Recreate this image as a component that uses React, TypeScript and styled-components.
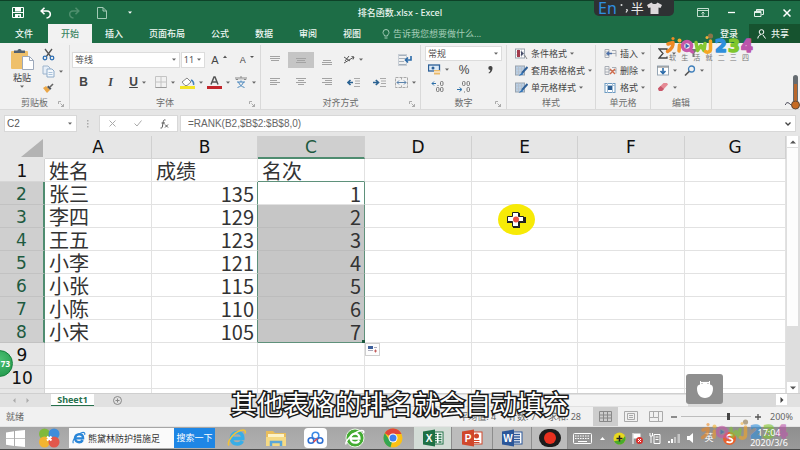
import React from "react";
import styled, { createGlobalStyle, css } from "styled-components";

const GREEN = "#1d6d46";
const UI_FONT = `"Noto Sans", "Noto Sans CJK SC", sans-serif`;

const GlobalStyle = createGlobalStyle`
  *, *::before, *::after { box-sizing: border-box; }
  html, body { margin: 0; padding: 0; }
  body { font-family: ${UI_FONT}; font-size: 9px; line-height: 12px; color: #444; background: #e6e6e6; }
  button, input, select { font: inherit; color: inherit; margin: 0; }
  button { border: 0; padding: 0; background: none; cursor: pointer; }
  svg { display: block; flex: none; }
`;

const Window = styled.div`
  position: relative;
  display: flex;
  flex-direction: column;
  height: 100vh;
  overflow: hidden;
`;

/* ---------- title bar ---------- */
const TopBar = styled.header`
  background: ${GREEN};
  border-top: 1px solid #0d4127;
  color: #e9f4ee;
`;
const TitleRow = styled.div`
  display: grid;
  grid-template-columns: 1fr auto 1fr;
  align-items: center;
  height: 23px;
`;
const QuickAccess = styled.div`
  display: flex;
  align-items: center;
  gap: 16px;
  padding-left: 12px;
`;
const Title = styled.h1`
  margin: 0;
  font-size: 9px;
  line-height: 12px;
  font-weight: 500;
`;
const WindowButtons = styled.div`
  display: flex;
  justify-content: flex-end;
  align-items: center;
  gap: 16px;
  padding-right: 7px;
`;
const IconButton = styled.button`
  display: flex;
  align-items: center;
  justify-content: center;
  gap: 4px;
  min-width: 12px;
  height: 14px;
`;

const TabRow = styled.nav`
  display: flex;
  align-items: stretch;
  height: 19px;
`;
const Tab = styled.button<{ $active?: boolean; $w?: number }>`
  width: ${(p) => p.$w ?? 44}px;
  height: 19px;
  line-height: 18px;
  font-weight: 500;
  color: ${(p) => (p.$active ? "#3c8563" : "#eef7f2")};
  background: ${(p) => (p.$active ? "#f2f2f2" : "transparent")};
`;
const TellMe = styled.label`
  display: flex;
  align-items: center;
  flex: 1;
  gap: 3px;
  padding-left: 8px;
  color: #a5cdb8;
  input {
    width: 120px;
    border: 0;
    padding: 0;
    height: 16px;
    background: transparent;
    outline: none;
  }
  input::placeholder { color: #a5cdb8; opacity: 1; }
`;
const SignIn = styled.button`
  width: 36px;
  margin-right: 2px;
  font-weight: 500;
`;
const Share = styled.button`
  display: flex;
  align-items: center;
  gap: 5px;
  width: 51px;
  padding-left: 8px;
  background: #16532f;
  font-weight: 500;
`;

/* ---------- ribbon ---------- */
const Ribbon = styled.div`
  display: flex;
  height: 67px;
  padding: 2px 0 0;
  background: #f1f1f1;
  border-bottom: 1px solid #dadada;
`;
const Group = styled.section<{ $w: number }>`
  display: flex;
  flex-direction: column;
  width: ${(p) => p.$w}px;
  height: 64px;
  border-right: 1px solid #d9d9d9;
`;
const GroupBody = styled.div`
  flex: 1;
  display: flex;
  flex-direction: column;
`;
const GroupLabel = styled.div`
  position: relative;
  height: 13px;
  line-height: 14px;
  text-align: center;
  color: #6c6c6c;
  svg { position: absolute; right: 5px; top: 5px; }
`;
const ClipBody = styled.div`
  flex: 1;
  display: grid;
  grid-template-columns: 42px 1fr;
  padding-top: 2px;
`;
const PasteButton = styled.button`
  display: flex;
  flex-direction: column;
  align-items: center;
  width: 42px;
  line-height: 14px;
  padding: 1px 0 0 2px;
`;
const ClipTools = styled.div`
  display: flex;
  flex-direction: column;
  align-items: flex-start;
  gap: 3px;
`;
const AlignRow = styled.div`
  display: grid;
  grid-auto-flow: column;
  grid-auto-columns: 26px;
  align-items: center;
  height: 28px;
  padding: 1px 0 0 1px;
`;
const ToolRow = styled.div<{ $cell: number; $pad?: number }>`
  display: grid;
  grid-auto-flow: column;
  grid-auto-columns: ${(p) => p.$cell}px;
  justify-content: start;
  align-items: center;
  height: 18px;
  padding-left: ${(p) => p.$pad ?? 1}px;
`;
const Tool = styled.button<{ $on?: boolean }>`
  display: flex;
  align-items: center;
  justify-content: center;
  gap: 4px;
  height: 16px;
  background: ${(p) => (p.$on ? "#c5c5c5" : "transparent")};
`;
const Glyph = styled.span<{ $kind?: "bold" | "italic" | "under" | "grow" | "shrink" | "percent" }>`
  font-family: "Liberation Sans", sans-serif;
  font-size: 12px;
  line-height: 16px;
  font-weight: 700;
  color: #444;
  ${(p) => p.$kind === "italic" && css`font-family: "Liberation Serif", serif; font-style: italic;`}
  ${(p) => p.$kind === "under" && css`text-decoration: underline;`}
  ${(p) => p.$kind === "grow" && css`font-size: 11px; font-weight: 400;`}
  ${(p) => p.$kind === "shrink" && css`font-size: 9px; font-weight: 400;`}
  ${(p) => p.$kind === "percent" && css`font-weight: 400;`}
`;
const FontRow = styled.div`
  display: flex;
  align-items: center;
  gap: 1px;
  height: 28px;
  padding: 1px 0 0 2px;
`;
const SelectBox = styled.span<{ $w: number; $small?: boolean }>`
  display: grid;
  grid-template-columns: 1fr 7px;
  align-items: center;
  width: ${(p) => p.$w}px;
  height: ${(p) => (p.$small ? 15 : 16)}px;
  background: #fff;
  border: 1px solid #dcdcdc;
  select {
    grid-area: 1 / 1 / 2 / 3;
    appearance: none;
    width: 100%;
    height: 13px;
    line-height: 13px;
    border: 0;
    outline: none;
    padding: 0 0 0 2px;
    background: transparent;
    color: #555;
  }
  svg { grid-area: 1 / 2 / 2 / 3; pointer-events: none; }
`;
const GrowTool = styled(Tool)`
  width: 27px;
`;
const NumberBody = styled.div`
  flex: 1;
  display: flex;
  flex-direction: column;
  padding: 1px 0 0 4px;
`;
const NumberRow = styled.div`
  display: grid;
  grid-template-columns: repeat(3, 26px);
  align-items: center;
  height: 17px;
`;
const List = styled.div`
  flex: 1;
  display: flex;
  flex-direction: column;
  padding-left: 8px;
`;
const ListButton = styled.button`
  display: flex;
  align-items: center;
  gap: 3px;
  height: 17px;
  line-height: 14px;
  white-space: nowrap;
`;
const EditGrid = styled.div`
  flex: 1;
  display: grid;
  grid-template-columns: 27px 27px;
  grid-auto-rows: 17px;
  padding-left: 2px;
`;

/* ---------- formula bar ---------- */
const FormulaBar = styled.div`
  display: flex;
  align-items: stretch;
  height: 26px;
  padding: 5px 4px 4px 4px;
  background: #e6e6e6;
`;
const NameBox = styled.label`
  display: flex;
  align-items: center;
  width: 73px;
  padding-right: 4px;
  background: #fff;
  border: 1px solid #d8d8d8;
  input {
    flex: 1;
    width: 20px;
    height: 14px;
    border: 0;
    padding: 0 0 0 2px;
    outline: none;
    background: transparent;
    font: 10px/14px "Liberation Sans", sans-serif;
    color: #555;
  }
`;
const Dots = styled.div`
  display: flex;
  align-items: center;
  justify-content: center;
  width: 22px;
`;
const FormulaTools = styled.div`
  display: flex;
  align-items: center;
  justify-content: space-around;
  width: 79px;
  margin-right: 2px;
  background: #fff;
  border: 1px solid #d8d8d8;
`;
const FormulaField = styled.label`
  flex: 1;
  display: flex;
  align-items: center;
  padding-right: 4px;
  background: #fff;
  border: 1px solid #d8d8d8;
  input {
    flex: 1;
    height: 14px;
    border: 0;
    padding: 0 0 0 7px;
    outline: none;
    background: transparent;
    font: 10px/14px "Liberation Sans", sans-serif;
    color: #666;
  }
`;

/* ---------- sheet ---------- */
const SheetArea = styled.main`
  flex: 1 1 0;
  min-height: 0;
  display: grid;
  grid-template-columns: 1fr 14px;
  overflow: hidden;
`;
const TableClip = styled.div`
  min-height: 0;
  overflow: hidden;
  background: #fff;
`;
const Table = styled.table`
  width: 100%;
  table-layout: fixed;
  border-collapse: separate;
  border-spacing: 0;
`;
const Col = styled.col<{ $w?: number }>`
  width: ${(p) => (p.$w ? `${p.$w}px` : "auto")};
`;
const HeadCell = styled.th<{ $sel?: boolean }>`
  height: 23px;
  padding: 0;
  font: 400 17px/20px "DejaVu Sans", sans-serif;
  color: ${(p) => (p.$sel ? "#1d5a40" : "#111")};
  background: ${(p) => (p.$sel ? "#cfcfcf" : "#e6e6e6")};
  border-right: 1px solid #d0d0d0;
  border-bottom: ${(p) => (p.$sel ? "2px solid #4f8c70" : "1px solid #d4d4d4")};
`;
const Corner = styled.th`
  padding: 0 1px 1px 0;
  background: #e6e6e6;
  vertical-align: bottom;
  svg { margin-left: auto; }
`;
const RowHead = styled.th<{ $sel?: boolean }>`
  height: 23px;
  padding: 2px 0 0;
  font: 400 17px/20px "DejaVu Sans", sans-serif;
  color: ${(p) => (p.$sel ? "#1d5a40" : "#111")};
  background: ${(p) => (p.$sel ? "#cfcfcf" : "#e6e6e6")};
  border-right: ${(p) => (p.$sel ? "2px solid #4f8c70" : "1px solid #d4d4d4")};
  border-bottom: 1px solid ${(p) => (p.$sel ? "#c2c2c2" : "#d6d6d6")};
`;
const Cell = styled.td<{ $num?: boolean; $fill?: boolean; $greenRight?: boolean; $greenBottom?: boolean }>`
  position: relative;
  height: 23px;
  padding: 2px 3px 0 4px;
  font: 20px/20px "Noto Sans CJK SC", sans-serif;
  color: #333;
  white-space: nowrap;
  text-align: ${(p) => (p.$num ? "right" : "left")};
  background: ${(p) => (p.$fill ? "#c6c6c6" : "#fff")};
  border-right: 1px solid ${(p) => (p.$greenRight ? "#5f917b" : p.$fill ? "#c6c6c6" : "#e2e2e2")};
  border-bottom: 1px solid ${(p) => (p.$greenBottom ? "#5f917b" : p.$fill ? "#bcbcbc" : "#e2e2e2")};
`;
const FillHandle = styled.span`
  position: absolute;
  right: -2px;
  bottom: -2px;
  width: 4px;
  height: 4px;
  background: #1d5a40;
`;
const FillOptions = styled.button`
  position: absolute;
  left: 100%;
  top: 100%;
  z-index: 1;
  display: flex;
  align-items: center;
  justify-content: center;
  width: 15px;
  height: 13px;
  margin: 1px 0 0 1px;
  background: #fdfdfd;
  border: 1px solid #cfcfcf;
`;
const VScroll = styled.div`
  display: flex;
  flex-direction: column;
  justify-content: space-between;
  padding: 0 2px 0 1px;
  background: #dedede;
`;
const ScrollButton = styled.button`
  display: flex;
  align-items: center;
  justify-content: center;
  width: 11px;
  height: 11px;
  background: #fff;
`;
const ScrollThumb = styled.div`
  flex: 1;
  margin: 1px 0 56px;
  background: #fdfdfd;
`;

/* ---------- sheet tabs / status ---------- */
const SheetTabs = styled.div`
  display: flex;
  align-items: stretch;
  height: 14px;
  background: #e1e1e1;
  border-top: 1px solid #cfcfcf;
`;
const TabArrows = styled.div`
  display: flex;
  align-items: center;
  gap: 10px;
  width: 51px;
  padding-left: 12px;
`;
const SheetTab = styled.button`
  width: 43px;
  height: 12px;
  line-height: 10px;
  font-weight: 700;
  color: #26704c;
  background: #fff;
  border-bottom: 1px solid #26704c;
`;
const AddSheet = styled.button`
  display: flex;
  align-items: center;
  justify-content: center;
  width: 46px;
`;
const HScroll = styled.div`
  flex: 1;
  display: flex;
  justify-content: flex-end;
  margin-left: 260px;
`;
const HThumb = styled.div`
  flex: 1;
  margin: 1px 0;
  background: #f4f4f4;
`;
const HTrack = styled.div`
  width: 88px;
  background: #dadada;
`;
const HEnd = styled.div`
  width: 13px;
`;
const StatusBar = styled.footer`
  display: flex;
  align-items: center;
  height: 20px;
  padding: 0 7px 0 6px;
  background: #f1f1f1;
  color: #666;
  border-bottom: 1px solid #e4e4e4;
`;
const StatusText = styled.span`
  flex: 1;
`;
const Stats = styled.div`
  display: flex;
  gap: 12px;
  margin-right: 12px;
  white-space: nowrap;
`;
const ViewButton = styled.button<{ $on?: boolean }>`
  display: flex;
  align-items: center;
  justify-content: center;
  width: 25px;
  height: 19px;
  background: ${(p) => (p.$on ? "#cdcdcd" : "transparent")};
`;
const Zoom = styled.div`
  display: flex;
  align-items: center;
  gap: 1px;
  input {
    appearance: none;
    width: 70px;
    height: 8px;
    background: linear-gradient(#bdbdbd, #bdbdbd) center / 100% 1px no-repeat;
  }
  input::-webkit-slider-thumb {
    appearance: none;
    width: 3px;
    height: 7px;
    background: #444;
  }
`;
const ZoomValue = styled.span`
  width: 28px;
  text-align: right;
`;

/* ---------- taskbar ---------- */
const Taskbar = styled.div`
  display: flex;
  align-items: stretch;
  height: 23px;
  background: linear-gradient(#a6a6a6, #b0b0b0);
  border-bottom: 1px solid #4a4a4a;
`;
const TaskButton = styled.button<{ $w: number; $state?: "active" | "open" }>`
  display: flex;
  align-items: center;
  justify-content: center;
  width: ${(p) => p.$w}px;
  flex: none;
  background: ${(p) => (p.$state === "active" ? "#d3dcd6" : p.$state === "open" ? "#bcbcbc" : "transparent")};
  border-right: ${(p) => (p.$state ? "1px solid #8d8d8d" : "0")};
`;
const SearchBox = styled.label`
  display: flex;
  align-items: center;
  gap: 2px;
  width: 105px;
  margin: 1px 0 1px;
  padding-left: 3px;
  background: #fafafa;
  input {
    width: 84px;
    height: 16px;
    padding: 0;
    border: 0;
    background: transparent;
    outline: none;
    color: #333;
  }
`;
const SearchButton = styled.button`
  width: 41px;
  margin: 1px 0;
  background: #1e86e5;
  color: #fff;
`;
const Tray = styled.div`
  flex: 1;
  display: flex;
  align-items: center;
  justify-content: flex-end;
  background: linear-gradient(#8f8f8f, #9a9a9a);
`;
const TrayItem = styled.button<{ $w?: number }>`
  display: flex;
  align-items: center;
  justify-content: center;
  width: ${(p) => p.$w ?? 18}px;
  height: 20px;
  color: #fff;
`;
const Clock = styled.time`
  position: relative;
  z-index: 1;
  width: 60px;
  padding-right: 2px;
  text-align: center;
  line-height: 10px;
  color: #fff;
  span { display: block; }
`;

/* ---------- overlays ---------- */
const ImeBar = styled.div`
  position: absolute;
  top: 0;
  right: 126px;
  display: flex;
  align-items: center;
  gap: 3px;
  width: 80px;
  height: 16px;
  padding-left: 4px;
  background: #2e3133;
  border-radius: 0 0 5px 5px;
  color: #e8e8e8;
  font-size: 13px;
  line-height: 16px;
`;
const ImeMode = styled.span`
  color: #2f8fe0;
  font-size: 16px;
  line-height: 16px;
`;
const Brand = styled.div<{ $foot?: boolean }>`
  position: absolute;
  right: ${(p) => (p.$foot ? 10 : 45)}px;
  ${(p) => (p.$foot ? "bottom: 8px; opacity: 0.6;" : "top: 32px;")}
  pointer-events: none;
`;
const BrandCaption = styled.div`
  display: flex;
  justify-content: space-between;
  width: 80px;
  margin: -2px 0 0 8px;
  font-size: 7px;
  line-height: 8px;
  color: #777;
`;
const Thermometer = styled.div`
  position: absolute;
  right: 0;
  top: 74px;
`;
const Pointer = styled.div`
  position: absolute;
  left: 498px;
  top: 204px;
`;
const Bubble = styled.div`
  position: absolute;
  left: -14px;
  top: 350px;
  width: 27px;
  height: 27px;
  border-radius: 50%;
  background: radial-gradient(circle at 50% 35%, #4cc273, #1d9247);
  border: 1px solid #16803b;
  color: #fff;
  font: 700 8px/25px "Noto Sans", sans-serif;
  text-align: right;
  padding-right: 2px;
`;
const MouseBadge = styled.div`
  position: absolute;
  right: 77px;
  bottom: 46px;
  display: flex;
  align-items: center;
  justify-content: center;
  width: 37px;
  height: 30px;
  border-radius: 3px;
  background: #8f8f8f;
`;
const Caption = styled.p`
  position: absolute;
  left: 0;
  right: 0;
  bottom: 31px;
  margin: 0;
  text-align: center;
  font: 400 26px/32px "Noto Sans CJK SC", sans-serif;
  color: #fff;
  -webkit-text-stroke: 3px #1a1a1a;
  paint-order: stroke fill;
  pointer-events: none;
`;

/* ---------- drawings ---------- */
const Caret = ({ c = "#666" }: { c?: string }) => (
  <svg width="4" height="3" viewBox="0 0 4 3"><path d="M0 0.5h4L2 2.7z" fill={c} /></svg>
);
const Launcher = () => (
  <svg width="6" height="6" viewBox="0 0 6 6" fill="none" stroke="#999" strokeWidth=".8"><path d="M.5 3V.5H3M2.5 2.5l3 3M5.5 3v2.5H3" /></svg>
);
const Lines = ({ rows }: { rows: [number, number, number][] }) => (
  <svg width="12" height="12" viewBox="0 0 12 12" stroke="#a3a3a3" strokeWidth="1">
    {rows.map(([x1, x2, y], i) => <path key={i} d={`M${x1} ${y}H${x2}`} />)}
  </svg>
);
const IndentIcon = ({ right }: { right?: boolean }) => (
  <svg width="13" height="11" viewBox="0 0 13 11">
    <path d="M7 1.5h6M8 4h5M8 6.500h5M7 9.500h6" stroke="#aaa" />
    <path d={right ? "M0 5.500h4.500M2.800 3l2.700 2.500-2.700 2.500" : "M6 5.500H1.500M3.500 3L.8 5.500l2.700 2.500"} fill="none" stroke="#2a6292" strokeWidth="1.600" />
  </svg>
);
const DecimalIcon = ({ add }: { add?: boolean }) => (
  <svg width="14" height="12" viewBox="0 0 14 12" fill="none" stroke="#777">
    {add ? (
      <>
        <path d="M0 8.500h4M2.500 6.500L5 8.500l-2.500 2" stroke="#2c6fa8" />
        <rect x="5.500" y=".5" width="2.500" height="4" rx="1" /><rect x="10" y=".5" width="2.500" height="4" rx="1" /><rect x="10" y="6.500" width="2.500" height="4" rx="1" /><path d="M7.500 10.500v1" />
      </>
    ) : (
      <>
        <path d="M5 2.500H1M3 .5L1 2.500l2 2" stroke="#2c6fa8" />
        <rect x="9.500" y=".5" width="2.500" height="4" rx="1" /><rect x="5.500" y="6.500" width="2.500" height="4" rx="1" /><rect x="9.500" y="6.500" width="2.500" height="4" rx="1" /><path d="M7 4v1" />
      </>
    )}
  </svg>
);
const StyleIcon = ({ cond }: { cond?: boolean }) => (
  <svg width="13" height="12" viewBox="0 0 13 12">
    <rect x=".5" y="1" width="9" height="9" fill={cond ? "#fff" : "#b9cfe6"} stroke="#9aa4ae" />
    <path d="M3.500 1v9M6.500 1v9M.5 4h9M.5 7h9" stroke="#b6bcc4" strokeWidth=".7" />
    {cond ? (
      <><rect x="2" y="2" width="3" height="7" fill="#a33b4c" /><path d="M6 3l3 2.500L6 8z" fill="#454b68" /><path d="M9.500 7l2.500 4" stroke="#888" /></>
    ) : (
      <><path d="M12.500 2L7 8" stroke="#2f5f96" strokeWidth="2" /><path d="M7.500 7l-4 4 4.500-1.500z" fill="#2d72b8" /></>
    )}
  </svg>
);
const CellIcon = ({ kind }: { kind: "insert" | "delete" | "format" }) => (
  <svg width="13" height="12" viewBox="0 0 13 12" fill="none">
    {kind === "format" ? (
      <><rect x="1" y="1.500" width="10" height="9" fill="#fff" stroke="#6d9bc2" /><path d="M1 3.500h10M3.500 1v10M8.500 1v10" stroke="#a3bdd4" /><rect x="4" y="4" width="4" height="4" fill="#2b5e93" /></>
    ) : (
      <>
        <path d="M1 1.500h4v8H1zM1 4h4M1 7h4M5 5.500h7M8 2.500h4v6" stroke="#a8adb5" />
        {kind === "insert" ? <path d="M3 5.500h5M5 3.800L3 5.500l2 1.700" stroke="#4b6fa8" strokeWidth="1.300" /> : <path d="M6 4l5 5M11 4L6 9" stroke="#cf6a4a" strokeWidth="1.400" />}
      </>
    )}
  </svg>
);
const IeIcon = ({ s, c = "#2a86d8", ring = "#f0c23a" }: { s: number; c?: string; ring?: string }) => (
  <svg width={s} height={s} viewBox="0 0 20 20" fill="none">
    <path d="M4.500 10.500h11.300c.2-4-2.300-6-5.500-6-3.500 0-6 2.500-6 5.800 0 3.400 2.600 5.700 5.900 5.700 2.400 0 4.200-1 5.200-3" stroke={c} strokeWidth="3.500" />
    <path d="M2 17.500C-.5 14 6 5 13.500 2.500c4-1.300 5.500.3 4.500 3" stroke={ring} strokeWidth="1.600" />
  </svg>
);
const GreenBrowserIcon = () => (
  <svg width="22" height="20" viewBox="0 0 22 20" fill="none">
    <circle cx="11" cy="10" r="9" fill="#43ab32" stroke="#e9f6e4" />
    <path d="M6.500 10.500h9c.1-3-1.700-4.800-4.300-4.800-2.700 0-4.700 1.900-4.700 4.600 0 2.600 2 4.400 4.700 4.400 1.900 0 3.300-.8 4.100-2.300" stroke="#fff" strokeWidth="2.300" />
    <path d="M2 16.500C1 13 8 6 14.500 3.200c4-1.500 6-.7 5 2" stroke="#fff" strokeWidth="1.500" />
  </svg>
);
const OfficeIcon = ({ c, letter }: { c: string; letter: string }) => (
  <svg width="22" height="18" viewBox="0 0 22 18">
    <rect x="10" y="3" width="11" height="12" fill="#fff" stroke={c} />
    {letter === "P" ? (
      <><circle cx="15.500" cy="7" r="2.500" fill={c} /><path d="M12.500 11.500h6M12.500 13.500h6" stroke={c} /></>
    ) : (
      <path d={letter === "X" ? "M12 5.500h3M16.500 5.500h3M12 8h3M16.500 8h3M12 10.500h3M16.500 10.500h3M12 13h3M16.500 13h3" : "M12 5.500h7M12 8h7M12 10.500h7M12 13h7"} stroke={c} strokeWidth="1.300" />
    )}
    <path d="M1 2.500L13 .5v17L1 15.500z" fill={c} />
    <text x="7" y="12.500" textAnchor="middle" fontSize="10" fontWeight="700" fontFamily="Liberation Sans, sans-serif" fill="#fff">{letter}</text>
  </svg>
);
const BrandArt = () => (
  <svg width="94" height="24" viewBox="0 0 94 24" fontFamily="DejaVu Sans, sans-serif" fontWeight="700">
    <g fontSize="17" strokeWidth="1.500" strokeLinejoin="round">
      <text x="54" y="20" fill="#2e8fdc" stroke="#2e8fdc">2</text>
      <text x="67" y="20" fill="#7fc62d" stroke="#7fc62d">3</text>
      <text x="80" y="20" fill="#bb55ab" stroke="#bb55ab">4</text>
    </g>
    <g fill="none" strokeLinecap="round" strokeLinejoin="round" strokeWidth="3.500">
      <path d="M7 12l5-1.500M12 10.500c.5 4-2 7-5.500 9" stroke="#f08a24" />
      <path d="M18.500 13l-.5 6" stroke="#f39a2b" />
      <circle cx="26" cy="14" r="4.500" stroke="#c657a8" />
      <path d="M29 18l2.500 2" stroke="#c657a8" />
      <path d="M35 10.500l1.500 8 3.500-5 3 5 1-7" stroke="#86c832" />
      <path d="M49.500 9v8c0 3-3 4-5 2.500" stroke="#f5a623" />
    </g>
    <circle cx="12" cy="6.500" r="1.600" fill="#f08a24" /><circle cx="18.500" cy="8.500" r="2" fill="#f3b02b" />
    <path d="M24.500 11.500l4 2.500-4 2.500z" fill="#3767b0" />
    <circle cx="49.500" cy="4" r="2.600" fill="#8a7448" /><circle cx="46" cy="5.500" r="1.500" fill="#f1b13b" />
  </svg>
);

const tableRows: [string, number][] = [
  ["张三", 135], ["李四", 129], ["王五", 123], ["小李", 121], ["小张", 115], ["小陈", 110], ["小宋", 105],
];
const columns = ["A", "B", "C", "D", "E", "F", "G"];
const columnWidths = [45, 107, 106, 107, 107, 106, 107];

function Sheet() {
  const blanks = (n: number) => Array.from({ length: n }, (_, i) => <Cell key={`blank-${i}`} />);
  return (
    <SheetArea>
      <TableClip>
        <Table>
          <colgroup>
            {columnWidths.map((w, i) => <Col key={i} $w={w} />)}
            <Col />
          </colgroup>
          <thead>
            <tr>
              <Corner aria-label="全选">
                <svg width="24" height="20" viewBox="0 0 24 20"><path d="M23 1v18H1z" fill="#b3b3b3" /></svg>
              </Corner>
              {columns.map((c) => <HeadCell key={c} scope="col" $sel={c === "C"}>{c}</HeadCell>)}
            </tr>
          </thead>
          <tbody>
            <tr>
              <RowHead scope="row">1</RowHead>
              <Cell>姓名</Cell><Cell>成绩</Cell><Cell $greenBottom>名次</Cell>{blanks(4)}
            </tr>
            {tableRows.map(([name, score], i) => {
              const last = i === tableRows.length - 1;
              return (
                <tr key={name}>
                  <RowHead scope="row" $sel>{i + 2}</RowHead>
                  <Cell>{name}</Cell>
                  <Cell $num $greenRight>{score}</Cell>
                  <Cell $num $fill={i > 0} $greenRight $greenBottom={last}>
                    {i + 1}
                    {last && (
                      <>
                        <FillHandle />
                        <FillOptions aria-label="自动填充选项">
                          <svg width="11" height="9" viewBox="0 0 11 9"><path d="M1 1h5v3H1z" fill="#3d5f9b" /><path d="M1 5.500h5M7 2.500h3" stroke="#aab" /><path d="M7 6h3M8.500 4.500v3" stroke="#b44" strokeWidth=".8" /></svg>
                        </FillOptions>
                      </>
                    )}
                  </Cell>
                  {blanks(4)}
                </tr>
              );
            })}
            {[9, 10].map((n) => <tr key={n}><RowHead scope="row">{n}</RowHead>{blanks(7)}</tr>)}
            <tr><RowHead />{blanks(7)}</tr>
          </tbody>
        </Table>
      </TableClip>
      <VScroll>
        <ScrollButton aria-label="向上滚动"><svg width="6" height="4" viewBox="0 0 6 4"><path d="M0 3.500h6L3 .5z" fill="#555" /></svg></ScrollButton>
        <ScrollThumb />
        <ScrollButton aria-label="向下滚动"><svg width="6" height="4" viewBox="0 0 6 4"><path d="M0 .5h6L3 3.500z" fill="#555" /></svg></ScrollButton>
      </VScroll>
    </SheetArea>
  );
}

function RibbonBar() {
  return (
    <Ribbon>
      <Group $w={70}>
        <ClipBody>
          <PasteButton>
            <svg width="25" height="23" viewBox="0 0 25 23">
              <rect x="1" y="3" width="17" height="18" rx="1" fill="#efc06a" />
              <path d="M4 5V2.500h3.500C8 .5 11 .5 11.500 2.500H15V5z" fill="#51606f" />
              <path d="M12.500 8.500h7l4 4v9h-11z" fill="#fff" stroke="#9da9bb" /><path d="M19.500 8.500v4h4" fill="none" stroke="#9da9bb" />
            </svg>
            粘贴
            <Caret />
          </PasteButton>
          <ClipTools>
            <IconButton aria-label="剪切">
              <svg width="13" height="13" viewBox="0 0 13 13" fill="none"><path d="M3 1l6 8M10 1L4 9" stroke="#555" strokeWidth="1.300" /><circle cx="3" cy="10" r="1.800" stroke="#2f70b4" strokeWidth="1.300" /><circle cx="10" cy="10" r="1.800" stroke="#2f70b4" strokeWidth="1.300" /></svg>
            </IconButton>
            <IconButton aria-label="复制">
              <svg width="13" height="13" viewBox="0 0 13 13"><path d="M1 1h5l2 2v6H1z" fill="#e6eef7" stroke="#9db4cc" /><path d="M5 4h5l2 2v6H5z" fill="#f4f8fc" stroke="#8eabc9" /><path d="M6.500 7.500h4M6.500 9.500h4" stroke="#a9c2db" /></svg>
              <Caret />
            </IconButton>
            <IconButton aria-label="格式刷">
              <svg width="12" height="12" viewBox="0 0 12 12"><path d="M1 6l3-2 4 4-3 3z" fill="#eba747" /><path d="M5 5l3 3 1.500-1.500-3-3z" fill="#50545c" /><path d="M8 5l3-3" stroke="#666" strokeWidth="1.600" /></svg>
            </IconButton>
          </ClipTools>
        </ClipBody>
        <GroupLabel>剪贴板<Launcher /></GroupLabel>
      </Group>

      <Group $w={191}>
        <GroupBody>
          <FontRow>
            <SelectBox $w={109}><select aria-label="字体" defaultValue="等线"><option>等线</option></select><Caret /></SelectBox>
            <SelectBox $w={24}><select aria-label="字号" defaultValue="11"><option>11</option></select><Caret /></SelectBox>
            <GrowTool aria-label="增大字号"><Glyph $kind="grow">A</Glyph><svg width="4" height="9" viewBox="0 0 4 9"><path d="M0 3L2 .5 4 3z" fill="#555" /></svg></GrowTool>
            <GrowTool aria-label="减小字号"><Glyph $kind="shrink">A</Glyph><svg width="4" height="9" viewBox="0 0 4 9"><path d="M0 1h4L2 3z" fill="#555" /></svg></GrowTool>
          </FontRow>
          <ToolRow $cell={27} $pad={0}>
            <Tool aria-label="加粗"><Glyph>B</Glyph></Tool>
            <Tool aria-label="倾斜"><Glyph $kind="italic">I</Glyph></Tool>
            <Tool aria-label="下划线"><Glyph $kind="under">U</Glyph><Caret /></Tool>
            <Tool aria-label="边框"><svg width="12" height="12" viewBox="0 0 12 12" fill="none" stroke="#c4c4c4"><path d="M.5 .5h11v11H.5zM6 .5v11M.5 6h11" /><path d="M.5 11.500h11" stroke="#999" /></svg><Caret /></Tool>
            <Tool aria-label="填充颜色"><svg width="15" height="13" viewBox="0 0 15 13"><path d="M2 6l5-4 4 4-4 3.500H5z" fill="#fff" stroke="#888" /><path d="M11 4c2 1 3 2.500 2.500 5" stroke="#4682bd" strokeWidth="1.500" fill="none" /><rect y="10" width="15" height="3" fill="#f4e526" /></svg><Caret /></Tool>
            <Tool aria-label="字体颜色"><svg width="15" height="13" viewBox="0 0 15 13"><path d="M4 8.500L7 1h1l3 7.500M5 6h5" stroke="#555" strokeWidth="1.500" fill="none" /><rect y="10" width="15" height="3" fill="#c2252b" /></svg><Caret /></Tool>
            <Tool aria-label="拼音"><svg width="13" height="12" viewBox="0 0 13 12" fill="none"><path d="M1 1v2.500h2V1M5 3.500V1h2v2.500M9 1v2.500h2V1" stroke="#888" /><path d="M2 6h8M6 4.500V6M3.500 6c1 3 3 4.500 6 5.500M8.500 6c-1 3-3 4.500-6 5.500" stroke="#4a87bd" /></svg><Caret /></Tool>
          </ToolRow>
        </GroupBody>
        <GroupLabel>字体<Launcher /></GroupLabel>
      </Group>

      <Group $w={160}>
        <GroupBody>
          <AlignRow>
            <Tool aria-label="顶端对齐"><Lines rows={[[1, 11, 2.5], [1, 11, 4.5], [2, 10, 6.5]]} /></Tool>
            <Tool aria-label="垂直居中" $on><Lines rows={[[1, 11, 4.5], [2, 10, 6.5], [1, 11, 8.5]]} /></Tool>
            <Tool aria-label="底端对齐"><Lines rows={[[2, 10, 6.5], [1, 11, 8.5], [1, 11, 10.5]]} /></Tool>
            <Tool aria-label="方向"><svg width="12" height="11" viewBox="0 0 12 11" fill="none" stroke="#555"><path d="M1 3l6 4M2 7l4-5M1 9L11 3M8.500 2.500L11 3l-1 2.500" /></svg><Caret /></Tool>
            <span />
            <Tool aria-label="自动换行"><svg width="14" height="12" viewBox="0 0 14 12" fill="none"><path d="M1 1.500h7M1 4.500h7M1 7.500h5M1 10.500h7" stroke="#a5b0bb" /><rect x=".5" y=".5" width="8" height="11" stroke="#c8ced5" /><path d="M13 2v4H8M10 3.500L7.500 6 10 8.500" stroke="#2a6aa8" strokeWidth="1.600" /></svg></Tool>
          </AlignRow>
          <ToolRow $cell={26}>
            <Tool aria-label="左对齐"><Lines rows={[[1, 11, 2.5], [1, 8, 4.5], [1, 11, 6.5], [1, 8, 8.5]]} /></Tool>
            <Tool aria-label="居中"><Lines rows={[[1, 11, 2.5], [3, 9, 4.5], [1, 11, 6.5], [3, 9, 8.5]]} /></Tool>
            <Tool aria-label="右对齐"><Lines rows={[[1, 11, 2.5], [4, 11, 4.5], [1, 11, 6.5], [4, 11, 8.5]]} /></Tool>
            <Tool aria-label="减少缩进"><IndentIcon /></Tool>
            <Tool aria-label="增加缩进"><IndentIcon right /></Tool>
            <Tool aria-label="合并后居中"><svg width="13" height="11" viewBox="0 0 13 11" fill="none"><path d="M.5 .5h12v10H.5zM6.500 .5v2M6.500 8.500v2" stroke="#a9a9a9" strokeDasharray="3 1" /><path d="M2 5.500h9M4 3.500l-2 2 2 2M9 3.500l2 2-2 2" stroke="#5c84ac" /></svg><Caret /></Tool>
          </ToolRow>
        </GroupBody>
        <GroupLabel>对齐方式<Launcher /></GroupLabel>
      </Group>

      <Group $w={86}>
        <NumberBody>
          <SelectBox $w={77} $small><select aria-label="数字格式" defaultValue="常规"><option>常规</option></select><Caret /></SelectBox>
          <NumberRow>
            <Tool aria-label="会计格式"><svg width="13" height="11" viewBox="0 0 13 11"><rect x=".5" y="1" width="11" height="6" fill="#dbe9f6" stroke="#2c5f97" strokeWidth="1.300" /><circle cx="5" cy="4" r="1.500" fill="#2c5f97" /><path d="M6 6h6v4.500H6z" fill="#e9b96a" /><path d="M6 8h6" stroke="#fff" /></svg><Caret /></Tool>
            <Tool aria-label="百分比"><Glyph $kind="percent">%</Glyph></Tool>
            <Tool aria-label="千位分隔"><svg width="5" height="8" viewBox="0 0 5 8"><path d="M2.300 0a2 2 0 0 1 2.200 2.300C4.500 5 3 6.800 1 7.500L.5 6.800C1.700 6 2.300 5 2.300 4A2 2 0 0 1 2.300 0z" fill="#444" /></svg></Tool>
          </NumberRow>
          <NumberRow>
            <Tool aria-label="增加小数位数"><DecimalIcon /></Tool>
            <Tool aria-label="减少小数位数"><DecimalIcon add /></Tool>
          </NumberRow>
        </NumberBody>
        <GroupLabel>数字<Launcher /></GroupLabel>
      </Group>

      <Group $w={89}>
        <List>
          <ListButton><StyleIcon cond />条件格式<Caret /></ListButton>
          <ListButton><StyleIcon />套用表格格式<Caret /></ListButton>
          <ListButton><StyleIcon />单元格样式<Caret /></ListButton>
        </List>
        <GroupLabel>样式</GroupLabel>
      </Group>

      <Group $w={55}>
        <List>
          <ListButton><CellIcon kind="insert" />插入<Caret /></ListButton>
          <ListButton><CellIcon kind="delete" />删除<Caret /></ListButton>
          <ListButton><CellIcon kind="format" />格式<Caret /></ListButton>
        </List>
        <GroupLabel>单元格</GroupLabel>
      </Group>

      <Group $w={61}>
        <EditGrid>
          <Tool aria-label="自动求和"><svg width="10" height="11" viewBox="0 0 10 11"><path d="M9 2.500V1H1l4 4.500L1 10h8V8.500" fill="none" stroke="#444" strokeWidth="1.300" /></svg><Caret /></Tool>
          <Tool aria-label="排序和筛选"><svg width="10" height="10" viewBox="0 0 10 10"><path d="M0 1h9L5.500 5v4h-2V5z" fill="#777" /></svg></Tool>
          <Tool aria-label="填充"><svg width="12" height="11" viewBox="0 0 12 11"><rect x=".5" y="1" width="11" height="9" fill="#fff" stroke="#97a7b5" /><path d="M.5 2h11" stroke="#777" /><path d="M6 3v5M3.500 6L6 8.500 8.500 6" fill="none" stroke="#2b6ba9" strokeWidth="1.600" /></svg><Caret /></Tool>
          <Tool aria-label="查找和选择"><svg width="12" height="11" viewBox="0 0 12 11" fill="none"><circle cx="7.500" cy="4" r="3" stroke="#3f7fbb" strokeWidth="1.300" /><path d="M5.300 6.200L1 10.500" stroke="#555" strokeWidth="1.600" /></svg><Caret /></Tool>
          <Tool aria-label="清除"><svg width="12" height="10" viewBox="0 0 12 10"><path d="M1 6.500L6.500 1h3.500l1 1.500L5 9H2z" fill="#e58a94" /><path d="M1 6.500L3.500 4l3.500 3-2 2H2z" fill="#c9586b" /></svg><Caret /></Tool>
        </EditGrid>
        <GroupLabel>编辑</GroupLabel>
      </Group>
    </Ribbon>
  );
}

function TaskBar() {
  return (
    <Taskbar>
      <TaskButton $w={30} aria-label="开始">
        <svg width="19" height="17" viewBox="0 0 19 17"><path d="M0 2.500l8-1.300v7H0zM9 1l10-1v8.200H9zM0 9h8v7L0 14.800zM9 9h10v8L9 15.900z" fill="#fff" /></svg>
      </TaskButton>
      <TaskButton $w={39} aria-label="浏览器导航">
        <svg width="23" height="20" viewBox="0 0 23 20"><circle cx="6.500" cy="6" r="5.500" fill="#7fba3c" /><circle cx="16" cy="6" r="5.500" fill="#3f8ddb" /><circle cx="6.500" cy="14" r="5.500" fill="#f2b430" /><circle cx="16" cy="14" r="5.500" fill="#e2574c" /><path d="M9 8.500l4.500 4M13.500 8.500L9 12.500" stroke="#fff" strokeWidth="2" /></svg>
      </TaskButton>
      <SearchBox>
        <IeIcon s={14} ring="#2a86d8" />
        <input aria-label="搜索" defaultValue="熊黛林防护措施足" />
      </SearchBox>
      <SearchButton>搜索一下</SearchButton>
      <TaskButton $w={44} aria-label="Internet Explorer"><IeIcon s={20} c="#37aee8" /></TaskButton>
      <TaskButton $w={34} aria-label="文件资源管理器">
        <svg width="22" height="18" viewBox="0 0 22 18"><path d="M1 2h7l2 2h11v13H1z" fill="#e8bd5c" /><path d="M3 5h16v9H3z" fill="#fdf3c8" /><path d="M1 8h20v9H1z" fill="#f6da84" /><path d="M6 17v-4h10v4" fill="none" stroke="#5aa7d8" strokeWidth="2.500" /></svg>
      </TaskButton>
      <TaskButton $w={44} aria-label="网盘">
        <svg width="23" height="20" viewBox="0 0 23 20" fill="none"><rect width="23" height="20" rx="4" fill="#fff" /><circle cx="11.500" cy="7.500" r="3.300" stroke="#3b8ae6" strokeWidth="1.600" /><circle cx="7" cy="12.500" r="2.800" stroke="#2d6fd2" strokeWidth="1.600" /><circle cx="16" cy="12.500" r="2.800" stroke="#2d6fd2" strokeWidth="1.600" /><path d="M9.500 14l4-3.500" stroke="#e5484d" strokeWidth="1.600" /></svg>
      </TaskButton>
      <TaskButton $w={35} aria-label="安全浏览器"><GreenBrowserIcon /></TaskButton>
      <TaskButton $w={42} aria-label="Chrome">
        <svg width="20" height="20" viewBox="0 0 20 20"><circle cx="10" cy="10" r="9.500" fill="#fbc116" /><path d="M10 10L1.800 5.200A9.500 9.500 0 0 1 18.500 6H10z" fill="#e0453a" /><path d="M10 10l-2.500 9.200A9.500 9.500 0 0 1 1.800 5.200L6.500 12z" fill="#34a552" /><circle cx="10" cy="10" r="4.500" fill="#fff" /><circle cx="10" cy="10" r="3.500" fill="#3d7ff0" /></svg>
      </TaskButton>
      <TaskButton $w={38} $state="active" aria-label="Excel"><OfficeIcon c="#1e7145" letter="X" /></TaskButton>
      <TaskButton $w={41} $state="open" aria-label="PowerPoint"><OfficeIcon c="#d0472b" letter="P" /></TaskButton>
      <TaskButton $w={39} $state="open" aria-label="Word"><OfficeIcon c="#2a5699" letter="W" /></TaskButton>
      <TaskButton $w={36} $state="open" aria-label="录制">
        <svg width="22" height="20" viewBox="0 0 22 20"><rect y="1" width="22" height="18" rx="9" fill="#1c1c1c" /><circle cx="11" cy="10" r="6" fill="#e8301f" /></svg>
      </TaskButton>
      <Tray>
        <TrayItem $w={26} aria-label="键盘"><svg width="19" height="11" viewBox="0 0 19 11" fill="none" stroke="#fff"><rect x=".5" y=".5" width="18" height="10" rx="1" /><path d="M2 3h15M2 5.500h15" strokeDasharray="1.500 1" /><path d="M5 8.500h9" /></svg></TrayItem>
        <TrayItem $w={15} aria-label="显示隐藏的图标"><svg width="5" height="3" viewBox="0 0 5 3"><path d="M0 3h5L2.500 0z" fill="#fff" /></svg></TrayItem>
        <TrayItem aria-label="安全卫士"><svg width="13" height="13" viewBox="0 0 13 13"><circle cx="6.500" cy="6.500" r="6" fill="#e8d81e" /><path d="M1 9A6 6 0 0 0 12 4L9 8z" fill="#49ab2b" /><path d="M6.500 3.500v6M3.500 6.500h6" stroke="#222" strokeWidth="1.500" /></svg></TrayItem>
        <TrayItem aria-label="操作中心"><svg width="13" height="13" viewBox="0 0 13 13"><path d="M2 1v11" stroke="#fff" /><path d="M2.500 1.500h7v5h-7z" fill="#fff" /><circle cx="8.500" cy="8.500" r="3.500" fill="#d9302c" /><path d="M7 7l3 3M10 7l-3 3" stroke="#fff" /></svg></TrayItem>
        <TrayItem aria-label="电源"><svg width="12" height="12" viewBox="0 0 12 12"><path d="M5 2.500h6v9H5z" fill="none" stroke="#fff" /><path d="M6.500 5h3M6.500 7.500h3" stroke="#fff" /><path d="M1 1v3h2.500V1M2 4v7" stroke="#fff" fill="none" /></svg></TrayItem>
        <TrayItem aria-label="网络"><svg width="13" height="10" viewBox="0 0 13 10"><path d="M1 10V8h2v2zM4 10V6h2v4z" fill="#fff" /><path d="M7 10V4h2v6zM10.500 10V1H13v9z" fill="#c6c6c6" /></svg></TrayItem>
        <TrayItem aria-label="音量"><svg width="10" height="12" viewBox="0 0 10 12"><path d="M1 4h2.500L7 1v10L3.500 8H1z" fill="#fff" /></svg></TrayItem>
        <TrayItem>英</TrayItem>
        <TrayItem $w={22} aria-label="输入法"><svg width="13" height="13" viewBox="0 0 13 13"><circle cx="6.500" cy="6.500" r="6.500" fill="#e8612c" /><path d="M9.500 3.500C7 2 4 3 4 4.500c0 2.200 5.500 1.500 5.500 3.800C9.500 10.500 6 11 3.500 9.500" fill="none" stroke="#fff" strokeWidth="1.800" /></svg></TrayItem>
        <Clock><span>17:04</span><span>2020/3/6</span></Clock>
      </Tray>
    </Taskbar>
  );
}

export default function App() {
  return (
    <Window>
      <GlobalStyle />
      <TopBar>
        <TitleRow>
          <QuickAccess>
            <IconButton aria-label="保存"><svg width="12" height="11" viewBox="0 0 12 11"><path d="M.5 .5h11v10H.5z" fill="none" stroke="#fff" /><path d="M3 1h6v3.500H3zM3 7h6v3.500H7.500V8.500H6v2H3z" fill="#fff" /><path d="M.5 5.500h11" stroke="#fff" /></svg></IconButton>
            <IconButton aria-label="撤消"><svg width="12" height="12" viewBox="0 0 12 12" fill="none" stroke="#fff" strokeWidth="1.600"><path d="M4.500 .8L1.200 4l3.300 3.200M1.500 4h5.500c4.500 0 4.500 6.500-.5 7" /></svg></IconButton>
            <IconButton aria-label="恢复"><svg width="12" height="12" viewBox="0 0 12 12" fill="none" stroke="#4f8f6e" strokeWidth="1.500"><path d="M7.500 .8L10.800 4 7.500 7.200M10.500 4H5C.5 4 .5 10.500 5.500 11" /></svg></IconButton>
            <IconButton aria-label="新建"><svg width="10" height="12" viewBox="0 0 10 12" fill="none" stroke="#a3c9b5"><path d="M.5 .5h5.500l3.500 3.500v7.500h-9zM6 .5V4h3.500" /></svg></IconButton>
            <IconButton aria-label="自定义快速访问工具栏"><Caret c="#fff" /></IconButton>
          </QuickAccess>
          <Title>排名函数.xlsx - Excel</Title>
          <WindowButtons>
            <IconButton aria-label="功能区显示选项"><svg width="12" height="9" viewBox="0 0 12 9" fill="none" stroke="#c4dfd0"><path d="M.5 .5h11v8H.5zM.5 2.500h11M6 8V4M4.500 5.500L6 4l1.500 1.500" /></svg></IconButton>
            <IconButton aria-label="最小化"><svg width="7" height="3" viewBox="0 0 7 3"><path d="M0 1.500h7" stroke="#fff" strokeWidth="1.300" /></svg></IconButton>
            <IconButton aria-label="还原"><svg width="10" height="8" viewBox="0 0 10 8" fill="none" stroke="#e4f1ea"><path d="M.5 2.500h6.500v5H.5zM.5 3.500H7M2.500 2V.5h7v5H7.500M2.500 1.200h7" /></svg></IconButton>
            <IconButton aria-label="关闭"><svg width="8" height="8" viewBox="0 0 8 8"><path d="M.5 .5l7 7M7.500 .5l-7 7" stroke="#fff" strokeWidth="1.500" /></svg></IconButton>
          </WindowButtons>
        </TitleRow>
        <TabRow>
          <Tab $w={48}>文件</Tab>
          <Tab $active>开始</Tab>
          <Tab>插入</Tab>
          <Tab $w={62}>页面布局</Tab>
          <Tab>公式</Tab><Tab>数据</Tab><Tab>审阅</Tab><Tab>视图</Tab>
          <TellMe>
            <svg width="8" height="10" viewBox="0 0 8 10" fill="none" stroke="#a5cdb8"><path d="M2.500 7C2.500 5.500 1 5 1 3.500a3 3 0 0 1 6 0C7 5 5.500 5.500 5.500 7zM2.500 9h3" /></svg>
            <input aria-label="告诉我您想要做什么" placeholder="告诉我您想要做什么..." />
          </TellMe>
          <SignIn>登录</SignIn>
          <Share>
            <svg width="9" height="10" viewBox="0 0 9 10" fill="none" stroke="#fff"><circle cx="4.500" cy="3" r="2.300" /><path d="M.8 9.500C1 7 2.500 5.800 4 5.600M6 6l2.500 3.500" /></svg>
            共享
          </Share>
        </TabRow>
      </TopBar>

      <RibbonBar />

      <FormulaBar>
        <NameBox><input aria-label="名称框" defaultValue="C2" /><Caret /></NameBox>
        <Dots><svg width="2" height="8" viewBox="0 0 2 8"><path d="M0 0h1.500v1.500H0zM0 3h1.500v1.500H0zM0 6h1.500v1.500H0z" fill="#aaa" /></svg></Dots>
        <FormulaTools>
          <IconButton aria-label="取消"><svg width="7" height="7" viewBox="0 0 7 7"><path d="M.5 .5l6 6M6.500 .5l-6 6" stroke="#aaa" /></svg></IconButton>
          <IconButton aria-label="输入"><svg width="8" height="7" viewBox="0 0 8 7"><path d="M.5 3.500L3 6l4.500-5.500" stroke="#aaa" fill="none" /></svg></IconButton>
          <IconButton aria-label="插入函数"><svg width="9" height="10" viewBox="0 0 9 10" fill="none" stroke="#555"><path d="M.5 9c1.500.3 1.800-.5 2-2l.8-4.500C3.500 1 4.200.7 5.500 1M1.500 4h3.500M5 5.500l3 3M8 5.500l-3 3" /></svg></IconButton>
        </FormulaTools>
        <FormulaField>
          <input aria-label="编辑栏" defaultValue="=RANK(B2,$B$2:$B$8,0)" />
          <svg width="6" height="4" viewBox="0 0 6 4"><path d="M.5 .5L3 3 5.500 .5" fill="none" stroke="#444" strokeWidth="1.300" /></svg>
        </FormulaField>
      </FormulaBar>

      <Sheet />

      <SheetTabs>
        <TabArrows>
          <svg width="4" height="5" viewBox="0 0 4 5"><path d="M3.500 0v5L1 2.500z" fill="#aaa" /></svg>
          <svg width="4" height="5" viewBox="0 0 4 5"><path d="M.5 0v5L3 2.500z" fill="#aaa" /></svg>
        </TabArrows>
        <SheetTab>Sheet1</SheetTab>
        <AddSheet aria-label="新工作表"><svg width="9" height="9" viewBox="0 0 9 9" fill="none" stroke="#888"><circle cx="4.500" cy="4.500" r="4" /><path d="M4.500 2.500v4M2.500 4.500h4" /></svg></AddSheet>
        <HScroll>
          <HThumb /><HTrack />
          <ScrollButton aria-label="向右滚动"><svg width="4" height="6" viewBox="0 0 4 6"><path d="M.5 0v6l3-3z" fill="#444" /></svg></ScrollButton>
          <HEnd />
        </HScroll>
      </SheetTabs>

      <StatusBar>
        <StatusText>就绪</StatusText>
        <Stats><span>平均值: 4</span><span>计数: 7</span><span>求和: 28</span></Stats>
        <ViewButton $on aria-label="普通"><svg width="13" height="11" viewBox="0 0 13 11" fill="none" stroke="#888"><path d="M.5 .5h12v10H.5zM.5 4h12M.5 7h12M4.500 .5v10M8.500 .5v10" /></svg></ViewButton>
        <ViewButton aria-label="页面布局"><svg width="14" height="11" viewBox="0 0 14 11" fill="none" stroke="#aaa"><path d="M.5 .5h13v10H.5zM3.500 2.500h7v6h-7zM5 4.500h4M5 6.500h4" /></svg></ViewButton>
        <ViewButton aria-label="分页预览"><svg width="14" height="11" viewBox="0 0 14 11" fill="none" stroke="#aaa"><path d="M.5 .5h13v10H.5zM4.500 .5v6h5v-6M.5 6.500h4M9.500 6.500V10" /></svg></ViewButton>
        <Zoom>
          <IconButton aria-label="缩小"><svg width="6" height="2" viewBox="0 0 6 2"><path d="M0 1h6" stroke="#555" strokeWidth="1.300" /></svg></IconButton>
          <input type="range" aria-label="显示比例" min={0} max={100} defaultValue={68} />
          <IconButton aria-label="放大"><svg width="6" height="6" viewBox="0 0 6 6"><path d="M0 3h6M3 0v6" stroke="#555" strokeWidth="1.300" /></svg></IconButton>
          <ZoomValue>200%</ZoomValue>
        </Zoom>
      </StatusBar>

      <TaskBar />

      <ImeBar>
        <ImeMode>En</ImeMode>
        <svg width="8" height="10" viewBox="0 0 8 10"><circle cx="1.500" cy="2" r="1" fill="#ddd" /><path d="M6 6.500l1.500.5-1.500 2.500" stroke="#ddd" fill="none" strokeWidth="1.300" /></svg>
        <span>半</span>
        <svg width="15" height="12" viewBox="0 0 15 12"><path d="M4.500 .5c1.500 2 4.500 2 6 0L15 3l-1.500 3-2-.5V12h-8V5.500l-2 .5L0 3z" fill="#ddd9dc" /></svg>
      </ImeBar>
      <Brand>
        <BrandArt />
        <BrandCaption><span>软</span><span>生</span><span>活</span><span>就</span><span>二</span><span>三</span><span>四</span></BrandCaption>
      </Brand>
      <Brand $foot><BrandArt /></Brand>
      <Thermometer>
        <svg width="15" height="36" viewBox="0 0 15 36"><path d="M0 31c2-4 4-2 6 0" stroke="#334" fill="none" /><rect x="8" y="1" width="5" height="28" rx="2.500" fill="#656b70" /><rect x="9" y="10" width="3" height="20" fill="#b8672c" /><circle cx="10.500" cy="31" r="4" fill="#c66b22" stroke="#5f4a38" /></svg>
      </Thermometer>
      <Pointer>
        <svg width="37" height="31" viewBox="0 0 37 31"><ellipse cx="18.500" cy="15.500" rx="18.500" ry="15.500" fill="#f7ea06" /><path d="M15 9h7v4h6v6h-6v5h-7v-5H9v-6h6z" fill="#222" /><path d="M14.500 8.500h6v4h5v5h-5v5h-6v-5h-5v-5h5z" fill="#fff" stroke="#222" /><circle cx="18" cy="15.500" r="3" fill="#ef5144" /></svg>
      </Pointer>
      <Bubble>73</Bubble>
      <MouseBadge>
        <svg width="18" height="19" viewBox="0 0 18 19"><path d="M4 1h10v3.500c2 .5 3 1.500 3 4C17 14 14 18 9 18S1 14 1 8.500c0-2.500 1-3.500 3-4z" fill="#fff" /><path d="M5 1.500h8M6 3v1M12 3v1" stroke="#999" /></svg>
      </MouseBadge>
      <Caption>其他表格的排名就会自动填充</Caption>
    </Window>
  );
}
